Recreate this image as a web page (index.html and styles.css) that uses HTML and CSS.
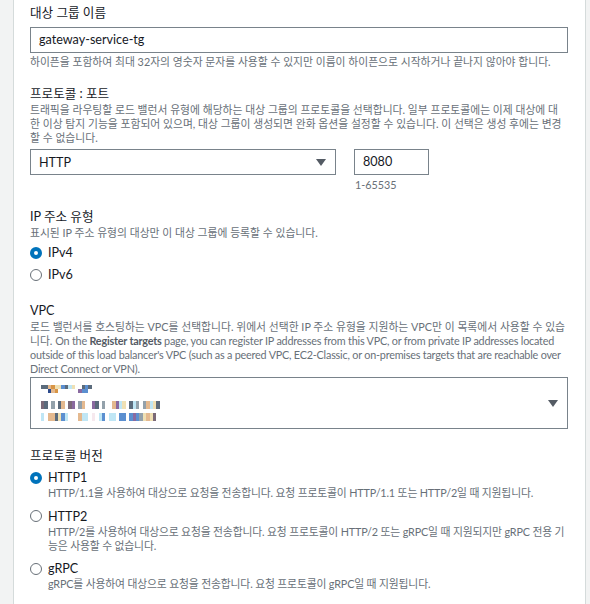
FILE: index.html
```html
<!DOCTYPE html>
<html lang="ko">
<head>
<meta charset="utf-8">
<title>대상 그룹</title>
<link rel="stylesheet" href="styles.css">
</head>
<body>
<div class="page">
  <div class="gutter"></div>
  <main class="panel">
    <section class="field f-name">
      <div class="label">대상 그룹 이름</div>
      <div class="input">gateway-service-tg</div>
      <p class="hint">하이픈을 포함하여 최대 32자의 영숫자 문자를 사용할 수 있지만 이름이 하이픈으로 시작하거나 끝나지 않아야 합니다.</p>
    </section>

    <section class="field f-proto">
      <div class="label">프로토콜 : 포트</div>
      <p class="desc">트래픽을 라우팅할 로드 밸런서 유형에 해당하는 대상 그룹의 프로토콜을 선택합니다. 일부 프로토콜에는 이제 대상에 대<br>한 이상 탐지 기능을 포함되어 있으며, 대상 그룹이 생성되면 완화 옵션을 설정할 수 있습니다. 이 선택은 생성 후에는 변경<br>할 수 없습니다.</p>
      <div class="proto-row">
        <div class="select proto">
          <span>HTTP</span>
          <svg class="caret" width="10" height="7" viewBox="0 0 10 7"><path d="M0 0H10L5 7Z" fill="#545b64"/></svg>
        </div>
        <div class="port">
          <div class="input port-input">8080</div>
          <p class="hint">1-65535</p>
        </div>
      </div>
    </section>

    <section class="field f-ip">
      <div class="label">IP 주소 유형</div>
      <p class="desc">표시된 IP 주소 유형의 대상만 이 대상 그룹에 등록할 수 있습니다.</p>
      <div class="radios">
        <div class="radio checked"><span class="dot"></span><span class="rlabel">IPv4</span></div>
        <div class="radio"><span class="dot"></span><span class="rlabel">IPv6</span></div>
      </div>
    </section>

    <section class="field f-vpc">
      <div class="label">VPC</div>
      <p class="desc">로드 밸런서를 호스팅하는 VPC를 선택합니다. 위에서 선택한 IP 주소 유형을 지원하는 VPC만 이 목록에서 사용할 수 있습<br>니다. <span class="en">On the <b>Register targets</b> page, you can register IP addresses from this VPC, or from private IP addresses located<br>outside of this load balancer's VPC (such as a peered VPC, EC2-Classic, or on-premises targets that are reachable over<br>Direct Connect or VPN).</span></p>
      <div class="select vpc">
        <div class="mosaic">
          <div class="mrow r1">
            <i class="a"></i><i class="a"></i><i class="o"></i><i class="o2"></i><i class="y"></i><i class="y"></i><i class="b"></i><i class="a"></i><i class="c"></i><i class="y"></i><i class="w"></i><i class="w"></i><i class="a"></i><i class="b"></i><i class="a"></i><i class="w"></i><i class="w"></i><i class="w"></i>
          </div>
          <div class="mrow r1b">
            <i class="w"></i><i class="w"></i><i class="n"></i><i class="o"></i><i class="o2"></i><i class="w"></i><i class="w"></i><i class="w"></i><i class="w"></i><i class="w"></i><i class="w"></i><i class="p"></i><i class="b"></i><i class="b"></i><i class="w"></i><i class="w"></i><i class="w"></i><i class="w"></i>
          </div>
          <div class="mrow r2">
            <i class="m"></i><i class="a"></i><i class="w"></i><i class="g"></i><i class="w"></i><i class="a"></i><i class="o"></i><i class="w"></i><i class="m"></i><i class="p"></i><i class="w"></i><i class="g"></i><i class="o"></i><i class="w"></i><i class="w"></i><i class="p"></i><i class="a"></i><i class="w"></i><i class="g"></i><i class="w"></i><i class="w"></i><i class="o"></i><i class="p"></i><i class="c"></i><i class="y"></i><i class="w"></i><i class="a"></i><i class="c"></i><i class="g"></i><i class="w"></i><i class="g"></i><i class="o"></i><i class="c"></i><i class="y"></i><i class="a"></i>
          </div>
          <div class="mrow r3">
            <i class="c"></i><i class="w"></i><i class="o"></i><i class="o"></i><i class="a"></i><i class="y"></i><i class="b"></i><i class="c"></i><i class="w"></i><i class="w"></i><i class="w"></i><i class="o"></i><i class="c"></i><i class="c"></i><i class="w"></i><i class="k"></i><i class="w"></i><i class="c"></i><i class="b"></i><i class="w"></i><i class="c"></i><i class="c"></i><i class="w"></i><i class="b"></i><i class="b"></i><i class="w"></i><i class="b"></i><i class="p"></i><i class="b"></i><i class="g"></i><i class="y"></i><i class="o"></i><i class="y"></i><i class="m"></i>
          </div>
        </div>
        <svg class="caret" width="10" height="7" viewBox="0 0 10 7"><path d="M0 0H10L5 7Z" fill="#545b64"/></svg>
      </div>
    </section>

    <section class="field f-ver">
      <div class="label">프로토콜 버전</div>
      <div class="options">
        <div class="option">
          <div class="radio checked"><span class="dot"></span><span class="rlabel">HTTP1</span></div>
          <p class="desc odesc">HTTP/1.1을 사용하여 대상으로 요청을 전송합니다. 요청 프로토콜이 HTTP/1.1 또는 HTTP/2일 때 지원됩니다.</p>
        </div>
        <div class="option">
          <div class="radio"><span class="dot"></span><span class="rlabel">HTTP2</span></div>
          <p class="desc odesc">HTTP/2를 사용하여 대상으로 요청을 전송합니다. 요청 프로토콜이 HTTP/2 또는 gRPC일 때 지원되지만 gRPC 전용 기<br>능은 사용할 수 없습니다.</p>
        </div>
        <div class="option">
          <div class="radio"><span class="dot"></span><span class="rlabel">gRPC</span></div>
          <p class="desc odesc">gRPC를 사용하여 대상으로 요청을 전송합니다. 요청 프로토콜이 gRPC일 때 지원됩니다.</p>
        </div>
      </div>
    </section>
  </main>
  <div class="rail"></div>
</div>
</body>
</html>
```

FILE: styles.css
```css
* { box-sizing: border-box; }
html, body { margin: 0; padding: 0; }
body {
  background: #f2f3f3;
  font-family: Lato, "Noto Sans CJK KR", sans-serif;
  color: #16191f;
}
.page {
  display: flex;
  min-height: 604px;
}
.gutter {
  width: 14px;
  background: #f2f3f3;
  border-right: 1px solid #d5dbdb;
}
.rail {
  width: 5px;
  background: #f2f3f3;
  border-left: 1px solid #d5dbdb;
}
.panel {
  flex: 1;
  background: #fff;
  padding: 4px 17px 0 16px;
}
.field { margin: 0 0 16px; }
.f-ip { margin-bottom: 19px; }
.f-vpc { margin-bottom: 18px; }
.label {
  font-size: 12.6px;
  line-height: 18px;
  color: #16191f;
}
.desc, .hint {
  margin: 0;
  font-size: 10.8px;
  line-height: 14px;
  color: #687078;
}
.desc .en { letter-spacing: -0.2px; }
.desc b { font-weight: 700; color: #545b64; }
.input {
  margin-top: 5px;
  height: 26px;
  border: 1px solid #79838b;
  padding: 0 8px;
  font-size: 12.6px;
  line-height: 24px;
  color: #16191f;
}
.field > .hint { margin-top: 2px; }
.proto-row {
  display: flex;
  gap: 18px;
  margin-top: 4px;
}
.select {
  border: 1px solid #79838b;
  display: flex;
  align-items: center;
  justify-content: space-between;
  padding: 0 8px;
  font-size: 12.6px;
  color: #16191f;
}
.proto { width: 306px; height: 26px; }
.port { width: 75px; }
.port-input { margin-top: 0; }
.port .hint { margin-top: 3px; padding-left: 1px; }
.caret { flex: none; margin-right: 1px; }
.radios { margin-top: 4px; display: flex; flex-direction: column; gap: 5px; }
.radio {
  display: flex;
  align-items: center;
  gap: 6px;
  font-size: 12.6px;
  line-height: 17px;
}
.dot {
  width: 12px;
  height: 12px;
  border-radius: 50%;
  border: 1px solid #687078;
  background: #fff;
  flex: none;
}
.radio.checked .dot {
  border: 4px solid #0073bb;
}
.vpc {
  margin-top: 1px;
  height: 52px;
  padding: 0 8px 0 10px;
  align-items: stretch;
}
.vpc .caret { align-self: center; }
.mosaic {
  display: flex;
  flex-direction: column;
  padding-top: 7px;
}
.mrow { display: flex; }
.mrow i { display: block; width: 3.4px; height: 4px; }
.r2 { margin-top: 8px; }
.r3 { margin-top: 4px; }
.r2 i, .r3 i { height: 8px; }
.mrow i.a { background: #5b6b7c; }
.mrow i.o { background: #e4b98f; }
.mrow i.o2 { background: #d89545; }
.mrow i.y { background: #efe0b4; }
.mrow i.b { background: #5b8fd0; }
.mrow i.g { background: #93a1ab; }
.mrow i.c { background: #bfe6f5; }
.mrow i.w { background: #ffffff; }
.mrow i.n { background: #2d4a8c; }
.mrow i.p { background: #8a6aa0; }
.mrow i.m { background: #7b6a78; }
.mrow i.k { background: #f6e9ee; }
.options { margin-top: 4px; display: flex; flex-direction: column; gap: 7.5px; }
.odesc { padding-left: 18px; margin-right: -6px; letter-spacing: -0.15px; }
```
